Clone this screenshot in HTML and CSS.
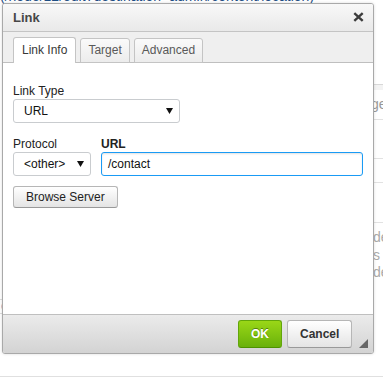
FILE: index.html
```html
<!DOCTYPE html>
<html lang="en">
<head>
  <meta charset="UTF-8">
  <title>Link</title>
  <link rel="stylesheet" href="styles.css">
</head>
<body>
  <div class="page">
    <p class="crumb">(/node/12/edit?destination=admin/content/location)</p>
    <div class="cols">
      <div class="main">
        <p class="para"><span class="lnk">list</span><br><span class="org">to</span><br><span class="lnk">su</span></p>
        <div class="tag">o</div>
      </div>
      <div class="side">
        <div class="side-head"></div>
        <div class="side-row tall"><span class="side-txt">ge</span></div>
        <div class="side-row r38"></div>
        <div class="side-row r23"></div>
        <div class="side-row r39"></div>
        <p class="side-para"><span>de</span><br><span>s</span><br><span>de</span></p>
      </div>
    </div>
    <div class="rule"></div>
  </div>

  <div class="dialog">
    <div class="dlg-title">
      <span>Link</span>
      <svg class="close" width="11" height="10" viewBox="0 0 11 10"><path d="M1.3 1.2L9.7 8.8M9.7 1.2L1.3 8.8" stroke="#3c3c3c" stroke-width="2.4"/></svg>
    </div>
    <div class="dlg-tabs">
      <span class="tab active">Link Info</span>
      <span class="tab">Target</span>
      <span class="tab">Advanced</span>
    </div>
    <div class="dlg-body">
      <label class="lbl">Link Type</label>
      <div class="select wide">
        <span>URL</span>
        <svg width="7" height="6" viewBox="0 0 7 6"><polygon points="0,0 7,0 3.5,6" fill="#111"/></svg>
      </div>
      <div class="pair">
        <div class="col">
          <label class="lbl">Protocol</label>
          <div class="select">
            <span>&lt;other&gt;</span>
            <svg width="7" height="6" viewBox="0 0 7 6"><polygon points="0,0 7,0 3.5,6" fill="#111"/></svg>
          </div>
        </div>
        <div class="col grow">
          <label class="lbl bold">URL</label>
          <div class="input focus">/contact</div>
        </div>
      </div>
      <button class="btn">Browse Server</button>
    </div>
    <div class="dlg-footer">
      <button class="btn btn-ok">OK</button>
      <button class="btn btn-cancel">Cancel</button>
      <svg class="resize" width="9" height="9" viewBox="0 0 9 9"><polygon points="9,0 9,9 0,9" fill="#666"/></svg>
    </div>
  </div>
</body>
</html>
```

FILE: styles.css
```css
body {
  margin: 0;
  width: 383px;
  height: 379px;
  overflow: hidden;
  position: relative;
  background: #fff;
  font-family: 'Liberation Sans', Arial, sans-serif;
  font-size: 14px;
  color: #333;
}
.page {
  height: 379px;
  display: flex;
  flex-direction: column;
}
.crumb {
  margin: -11px 0 0;
  line-height: 14px;
  color: #1f4f85;
  white-space: nowrap;
}
.cols {
  flex: 1;
  display: flex;
}
.main {
  width: 374px;
  display: flex;
  flex-direction: column;
}
.para {
  margin: 225px 0 0 -22px;
  line-height: 17.5px;
  font-size: 14px;
}
.lnk { color: #6f9fd6; }
.org { color: #c49a6c; }
.tag {
  margin-top: 18px;
  width: 15px;
  height: 13px;
  border: 1px solid #ddd;
  border-left: none;
  color: #7b98c0;
  font-size: 12px;
  line-height: 12px;
  padding-left: 1px;
  box-sizing: content-box;
}
.side {
  flex: 1;
  padding-top: 81px;
  overflow: hidden;
}
.side-head {
  height: 5px;
  border-top: 1px solid #d8d8d8;
  background: #f3f3f3;
}
.side-row {
  border-bottom: 1px solid #e2e2e2;
}
.side-row.tall {
  height: 29px;
  line-height: 29px;
}
.side-txt {
  margin-left: -3px;
  color: #999;
}
.r38 { height: 38px; }
.r23 { height: 23px; }
.r39 { height: 39px; }
.side-para {
  margin: 6px 0 0 -1px;
  line-height: 17.5px;
  color: #aaa;
  white-space: nowrap;
}
.rule {
  height: 1px;
  background: #e0e0e0;
  margin-bottom: 2px;
}

/* dialog */
.dialog {
  position: absolute;
  left: 2px;
  top: 3px;
  width: 370px;
  height: 349px;
  border: 1px solid #a9a9a9;
  border-radius: 3px;
  box-shadow: 0 0 3px rgba(0,0,0,0.15);
  background: #fff;
  display: flex;
  flex-direction: column;
  font-size: 12px;
  color: #222;
  overflow: hidden;
}
.dlg-title {
  height: 27px;
  flex: none;
  border-bottom: 1px solid #c4c4c4;
  background: linear-gradient(#f8f8f8, #e9e9e9);
  display: flex;
  align-items: center;
  justify-content: space-between;
  padding: 0 9px 0 10px;
  font-size: 13px;
  font-weight: bold;
  color: #474747;
}
.close { margin-top: -2px; }
.dlg-tabs {
  height: 30px;
  flex: none;
  background: #efefef;
  border-bottom: 1px solid #bfbfbf;
  display: flex;
  align-items: flex-end;
  gap: 4px;
  padding-left: 10px;
}
.tab {
  height: 23px;
  line-height: 23px;
  padding: 0 7px;
  margin-bottom: -1px;
  border: 1px solid #c4c4c4;
  border-radius: 3px 3px 0 0;
  background: linear-gradient(#fafafa, #ececec);
  color: #595959;
}
.tab.active {
  height: 25px;
  line-height: 24px;
  padding: 0 8px;
  border-bottom: none;
  background: #fff;
  color: #383838;
}
.dlg-body {
  flex: 1;
  padding: 21px 10px 0;
}
.lbl {
  display: block;
  line-height: 15px;
  color: #222;
}
.lbl.bold { font-weight: bold; }
.select {
  height: 22px;
  border: 1px solid #c9cccf;
  border-radius: 3px;
  background: #fff;
  display: flex;
  align-items: center;
  justify-content: space-between;
  padding: 0 6px 0 10px;
  color: #111;
}
.select.wide { width: 149px; }
.pair {
  display: flex;
  gap: 10px;
  margin-top: 14px;
}
.col { width: 78px; }
.col .select { box-sizing: border-box; height: 24px; }
.col.grow { flex: 1; }
.input {
  height: 22px;
  line-height: 22px;
  border: 1px solid #c9cccf;
  border-radius: 3px;
  padding: 0 6px;
  color: #111;
  box-shadow: inset 0 1px 2px rgba(0,0,0,0.12);
}
.input.focus { border-color: #1a9bf5; }
.btn {
  margin-top: 10px;
  height: 22px;
  padding: 0 12px;
  border: 1px solid #b6b6b6;
  border-bottom-color: #999;
  border-radius: 3px;
  background: linear-gradient(#fff, #e4e4e4);
  font-family: inherit;
  font-size: 12px;
  color: #222;
}
.dlg-footer {
  height: 38px;
  flex: none;
  border-top: 1px solid #bfbfbf;
  background: linear-gradient(#ebebeb, #d3d3d3);
  display: flex;
  align-items: center;
  justify-content: flex-end;
  gap: 5px;
  padding-right: 5px;
}
.dlg-footer .btn {
  margin: 0;
  height: 28px;
  font-weight: bold;
}
.btn-ok {
  width: 44px;
  color: #fff;
  border-color: #62a60a #62a60a #4d9200;
  background: linear-gradient(#9ad717, #69b10b);
  text-shadow: 0 -1px 0 #55830c;
}
.btn-cancel {
  width: 65px;
  color: #333;
  margin-right: 2px !important;
}
.resize {
  align-self: flex-end;
  margin-bottom: 5px;
}
```
